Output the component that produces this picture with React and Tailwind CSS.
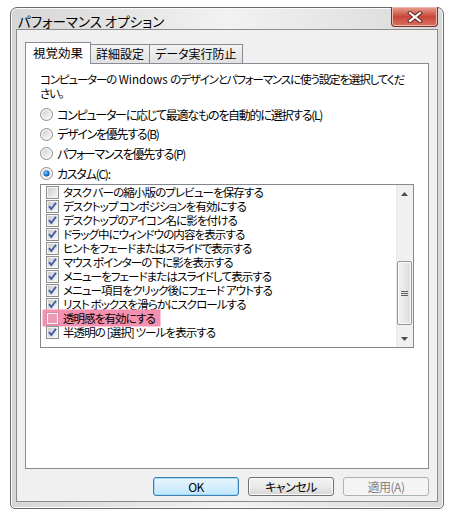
import React from "react";

const font = "font-['Noto_Sans_CJK_JP','Noto_Sans',sans-serif] [font-feature-settings:'palt']";

const radios = [
  { label: "コンピューターに応じて最適なものを自動的に選択する(L)", checked: false },
  { label: "デザインを優先する(B)", checked: false },
  { label: "パフォーマンスを優先する(P)", checked: false },
  { label: "カスタム(C):", checked: true },
];

const items = [
  { label: "タスク バーの縮小版のプレビューを保存する", checked: false },
  { label: "デスクトップ コンポジションを有効にする", checked: true },
  { label: "デスクトップのアイコン名に影を付ける", checked: true },
  { label: "ドラッグ中にウィンドウの内容を表示する", checked: true },
  { label: "ヒントをフェードまたはスライドで表示する", checked: true },
  { label: "マウス ポインターの下に影を表示する", checked: true },
  { label: "メニューをフェードまたはスライドして表示する", checked: true },
  { label: "メニュー項目をクリック後にフェード アウトする", checked: true },
  { label: "リスト ボックスを滑らかにスクロールする", checked: true },
  { label: "透明感を有効にする", checked: false, marked: true },
  { label: "半透明の [選択] ツールを表示する", checked: true },
];

function Radio({ checked }) {
  return (
    <svg width="13" height="13" viewBox="0 0 13 13" className="shrink-0">
      <defs>
        <linearGradient id="rg" x1="0" y1="0" x2="1" y2="1">
          <stop offset="0" stopColor="#cfcfcf" />
          <stop offset="1" stopColor="#fbfbfb" />
        </linearGradient>
        <radialGradient id="rd" cx="0.4" cy="0.4" r="0.7">
          <stop offset="0" stopColor="#8cd2ff" />
          <stop offset="0.5" stopColor="#1f7fd8" />
          <stop offset="1" stopColor="#0b3d7a" />
        </radialGradient>
      </defs>
      <circle cx="6.5" cy="6.5" r="6" fill="#f4f4f4" stroke="#8d8d8d" strokeWidth="1" />
      <circle cx="6.5" cy="6.5" r="4.2" fill="url(#rg)" />
      {checked && <circle cx="6.5" cy="6.5" r="3" fill="url(#rd)" />}
    </svg>
  );
}

function Check({ checked, marked }) {
  return (
    <svg width="13" height="13" viewBox="0 0 13 13" className="shrink-0">
      <defs>
        <linearGradient id="cg" x1="0" y1="0" x2="1" y2="1">
          <stop offset="0" stopColor="#cbcbcb" />
          <stop offset="1" stopColor="#f6f6f6" />
        </linearGradient>
      </defs>
      <rect x="0.5" y="0.5" width="12" height="12" fill="#f4f4f4" stroke={marked ? "#d98aa3" : "#8e8f8f"} />
      <rect x="2" y="2" width="9" height="9" fill={marked ? "#ea9ab4" : "url(#cg)"} />
      {checked && (
        <path d="M3 6.2 L5.3 9 L10 2.8" fill="none" stroke="#3d5ba6" strokeWidth="1.9" />
      )}
    </svg>
  );
}

function Tab({ label, active }) {
  return (
    <div
      className={
        active
          ? "relative z-10 -mb-px flex h-[22px] items-center border border-b-0 border-[#898c95] bg-white px-[7px] text-[12.5px] text-black"
          : "-ml-px mt-[2px] flex h-[19px] items-center border border-b-0 border-[#898c95] bg-gradient-to-b from-[#f3f3f3] to-[#e1e1e1] px-[5px] text-[12px] text-black"
      }
    >
      {label}
    </div>
  );
}

function Button({ label, kind }) {
  const styles = {
    default:
      "border-[#3c7fb1] bg-gradient-to-b from-[#eaf6fd] to-[#bee6fd] shadow-[inset_0_0_0_1px_#a7d9f5] text-black",
    normal:
      "border-[#707070] bg-gradient-to-b from-[#f2f2f2] via-[#ebebeb] to-[#d5d5d5] shadow-[inset_0_0_0_1px_#fcfcfc] text-black",
    disabled: "border-[#adb2b5] bg-[#f4f4f4] text-[#838383]",
  };
  return (
    <div
      className={`flex h-[19px] w-[86px] items-center justify-center rounded-[3px] border text-[12px] tracking-[-0.5px] ${styles[kind]}`}
    >
      {label}
    </div>
  );
}

export default function App() {
  return (
    <div className={`h-[518px] w-[456px] bg-white pl-[10px] pt-[7px] ${font}`}>
      <div className="flex h-[502px] w-[434px] flex-col rounded-t-[7px] rounded-b-[5px] border border-[#6b6b6b] bg-gradient-to-r from-[#d6d6d6] via-[#f2f2f2] to-[#d9d9d9] shadow-[inset_0_0_0_1px_#fafafa]">
        {/* title bar */}
        <div className="flex h-[21px] items-start justify-between pl-[7px] pr-[5px]">
          <div className="whitespace-nowrap pt-[5px] text-[13.5px] leading-[16px] text-black">パフォーマンス オプション</div>
          <div className="-mt-px flex h-[20px] w-[47px] items-center justify-center rounded-b-[4px] border border-t-0 border-[#7a3030] bg-gradient-to-b from-[#e4a194] via-[#c9463a] to-[#d6705e] shadow-[inset_0_0_0_1px_#f0b8ad]">
            <svg width="16" height="12" viewBox="0 0 16 12">
              <path d="M3 2 L13 10 M13 2 L3 10" stroke="#5a1f1f" strokeWidth="4" strokeLinecap="square" />
              <path d="M3 2 L13 10 M13 2 L3 10" stroke="#ffffff" strokeWidth="2.2" strokeLinecap="square" />
            </svg>
          </div>
        </div>

        {/* client area */}
        <div className="mx-[5px] mb-[6px] flex flex-1 flex-col border border-[#8c8c8c] bg-[#f0f0f0] px-[8px] pt-[12px]">
          <div className="flex items-end">
            <Tab label="視覚効果" active />
            <Tab label="詳細設定" />
            <Tab label="データ実行防止" />
          </div>
          <div className="flex h-[406px] flex-col border border-[#898c95] bg-white px-[14px] pt-[8px] text-[12px] text-black">
            <p className="whitespace-nowrap text-[11.5px] leading-[14px] tracking-[-1.15px]">
              コンピューターの<span className="tracking-normal"> Windows </span>のデザインとパフォーマンスに使う設定を選択してくだ
              <br />
              さい。
            </p>
            <div className="mt-[5px] flex flex-col">
              {radios.map((r) => (
                <div key={r.label} className="flex h-[19.6px] items-center gap-[4px]">
                  <Radio checked={r.checked} />
                  <span className="whitespace-nowrap tracking-[-1.25px]">{r.label}</span>
                </div>
              ))}
            </div>
            <div className="mt-px flex h-[164px] border border-[#828790] bg-white">
              <div className="flex flex-1 flex-col pl-[5px]">
                {items.map((it) => (
                  <div key={it.label} className="flex h-[14px] items-center">
                    <div
                      className={`-ml-[2px] flex h-[14px] items-center gap-[4px] pl-[2px] pr-[4px] ${
                        it.marked ? "bg-[#f490b0] shadow-[0_0_0_1.5px_#f490b0]" : ""
                      }`}
                    >
                      <Check checked={it.checked} marked={it.marked} />
                      <span className="whitespace-nowrap text-[11.5px] leading-[14px] tracking-[-0.9px]">{it.label}</span>
                    </div>
                  </div>
                ))}
              </div>
              {/* scrollbar */}
              <div className="flex w-[17px] flex-col bg-[#f0f0f0] shadow-[inset_1px_0_0_#e8e8e8]">
                <div className="flex h-[17px] items-center justify-center">
                  <svg width="7" height="4" viewBox="0 0 7 4">
                    <path d="M0 4 L3.5 0 L7 4 Z" fill="#4d4d4d" />
                  </svg>
                </div>
                <div className="flex-1" />
                <div className="mx-px flex h-[64px] items-center justify-center rounded-[2px] border border-[#979797] bg-gradient-to-r from-[#f3f3f3] to-[#dcdcdc] shadow-[inset_0_0_0_1px_#fbfbfb]">
                  <svg width="7" height="7" viewBox="0 0 7 7">
                    <path d="M0 1.5 H7 M0 3.5 H7 M0 5.5 H7" stroke="#5e5e5e" strokeWidth="1" />
                  </svg>
                </div>
                <div className="h-[5px]" />
                <div className="flex h-[17px] items-center justify-center">
                  <svg width="7" height="4" viewBox="0 0 7 4">
                    <path d="M0 0 L3.5 4 L7 0 Z" fill="#4d4d4d" />
                  </svg>
                </div>
              </div>
            </div>
          </div>

          {/* buttons */}
          <div className="mt-[8px] flex justify-end gap-[9px]">
            <Button label="OK" kind="default" />
            <Button label="キャンセル" kind="normal" />
            <Button label="適用(A)" kind="disabled" />
          </div>
        </div>
      </div>
    </div>
  );
}
